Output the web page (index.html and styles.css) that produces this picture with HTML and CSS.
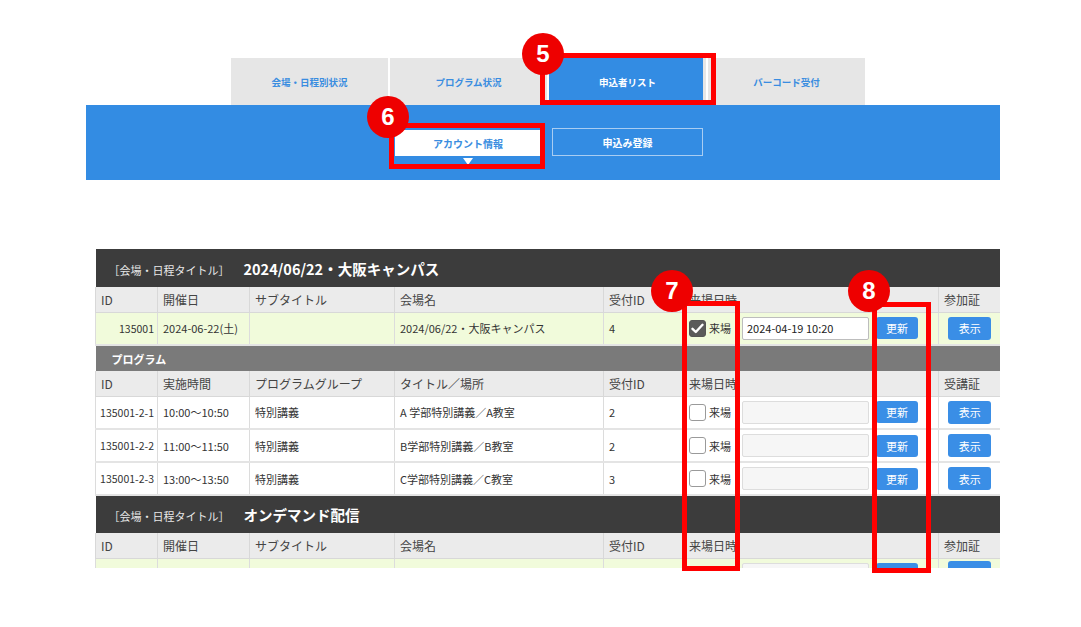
FILE: index.html
```html
<!DOCTYPE html>
<html>

<head>
    <title>申込者リスト</title>
    <link rel="stylesheet" href="styles.css">
</head>

<body>
    <div class="page">
        <div class="nav">
            <div class="tabs">
                <div class="tab">会場・日程別状況</div>
                <div class="tab">プログラム状況</div>
                <div class="tab tab-active">申込者リスト</div>
                <div class="tab">バーコード受付</div>
            </div>
            <div class="band">
                <div class="subtabs">
                    <div class="subtab subtab-active">アカウント情報</div>
                    <div class="subtab">申込み登録</div>
                </div>
            </div>
        </div>

        <div class="list">
            <table class="entry">
                <colgroup>
                    <col class="c-id">
                    <col class="c-date">
                    <col class="c-sub">
                    <col class="c-venue">
                    <col class="c-recv">
                    <col class="c-visit">
                    <col class="c-card">
                </colgroup>

                <tr class="venue">
                    <th colspan="7"><span class="venue-label">［会場・日程タイトル］</span><span class="venue-name">2024/06/22・大阪キャンパス</span></th>
                </tr>
                <tr class="cols">
                    <th>ID</th>
                    <th>開催日</th>
                    <th>サブタイトル</th>
                    <th>会場名</th>
                    <th>受付ID</th>
                    <th>来場日時</th>
                    <th>参加証</th>
                </tr>
                <tr class="row row-venue">
                    <td class="num">135001</td>
                    <td>2024-06-22(土)</td>
                    <td></td>
                    <td>2024/06/22・大阪キャンパス</td>
                    <td>4</td>
                    <td>
                        <div class="visit">
                            <span class="check check-on"><svg width="13" height="11" viewBox="0 0 13 11"><path d="M1.5 5.8 L4.8 9 L11.5 1.8" fill="none" stroke="#fff" stroke-width="2.4" stroke-linecap="round" stroke-linejoin="round"/></svg></span>
                            <span class="visit-label">来場</span>
                            <input class="stamp" type="text" value="2024-04-19 10:20">
                            <button class="btn">更新</button>
                        </div>
                    </td>
                    <td class="center"><button class="btn btn-wide">表示</button></td>
                </tr>

                <tr class="program">
                    <th colspan="7">プログラム</th>
                </tr>
                <tr class="cols">
                    <th>ID</th>
                    <th>実施時間</th>
                    <th>プログラムグループ</th>
                    <th>タイトル／場所</th>
                    <th>受付ID</th>
                    <th>来場日時</th>
                    <th>受講証</th>
                </tr>
                <tr class="row">
                    <td class="num">135001-2-1</td>
                    <td>10:00～10:50</td>
                    <td>特別講義</td>
                    <td>A 学部特別講義／A教室</td>
                    <td>2</td>
                    <td>
                        <div class="visit">
                            <span class="check"></span>
                            <span class="visit-label">来場</span>
                            <input class="stamp" type="text" disabled>
                            <button class="btn">更新</button>
                        </div>
                    </td>
                    <td class="center"><button class="btn btn-wide">表示</button></td>
                </tr>
                <tr class="row">
                    <td class="num">135001-2-2</td>
                    <td>11:00～11:50</td>
                    <td>特別講義</td>
                    <td>B学部特別講義／B教室</td>
                    <td>2</td>
                    <td>
                        <div class="visit">
                            <span class="check"></span>
                            <span class="visit-label">来場</span>
                            <input class="stamp" type="text" disabled>
                            <button class="btn">更新</button>
                        </div>
                    </td>
                    <td class="center"><button class="btn btn-wide">表示</button></td>
                </tr>
                <tr class="row">
                    <td class="num">135001-2-3</td>
                    <td>13:00～13:50</td>
                    <td>特別講義</td>
                    <td>C学部特別講義／C教室</td>
                    <td>3</td>
                    <td>
                        <div class="visit">
                            <span class="check"></span>
                            <span class="visit-label">来場</span>
                            <input class="stamp" type="text" disabled>
                            <button class="btn">更新</button>
                        </div>
                    </td>
                    <td class="center"><button class="btn btn-wide">表示</button></td>
                </tr>

                <tr class="venue">
                    <th colspan="7"><span class="venue-label">［会場・日程タイトル］</span><span class="venue-name">オンデマンド配信</span></th>
                </tr>
                <tr class="cols">
                    <th>ID</th>
                    <th>開催日</th>
                    <th>サブタイトル</th>
                    <th>会場名</th>
                    <th>受付ID</th>
                    <th>来場日時</th>
                    <th>参加証</th>
                </tr>
                <!-- next row only peeks in below the fold -->
                <tr class="row row-venue">
                    <td class="num"></td>
                    <td></td>
                    <td></td>
                    <td></td>
                    <td></td>
                    <td>
                        <div class="visit">
                            <span class="check check-off"></span>
                            <span class="visit-label"></span>
                            <input class="stamp" type="text" disabled>
                            <button class="btn"></button>
                        </div>
                    </td>
                    <td class="center"><button class="btn btn-wide"></button></td>
                </tr>
            </table>
        </div>

        <!-- callouts -->
        <div class="mark mark-5"></div>
        <div class="mark mark-6"></div>
        <div class="mark mark-7"></div>
        <div class="mark mark-8"></div>
        <div class="num-badge badge-5">5</div>
        <div class="num-badge badge-6">6</div>
        <div class="num-badge badge-7">7</div>
        <div class="num-badge badge-8">8</div>
    </div>
</body>

</html>
```

FILE: styles.css
```css
body {
    margin: 0;
    background-color: #ffffff;
    font-family: "Noto Sans CJK JP", "Noto Sans", sans-serif;
    color: #333333;
}

.page {
    position: relative;
    width: 1081px;
    height: 627px;
    overflow: hidden;
}

/* top navigation */

.nav {
    width: 914px;
    margin-left: 86px;
    padding-top: 58px;
}

.tabs {
    display: flex;
    gap: 2px;
    padding-left: 145px;
}

.tab {
    display: flex;
    justify-content: center;
    align-items: center;
    width: 157px;
    height: 47px;
    background-color: #e6e6e6;
    color: #3a8de0;
    font-size: 9.5px;
    font-weight: bold;
}

.tab-active {
    background-color: #338ce3;
    color: #ffffff;
    box-shadow: inset -3px 0 0 #e6e6e6;
}

.band {
    height: 75px;
    background-color: #338ce3;
    padding-top: 23px;
    box-sizing: border-box;
}

.subtabs {
    display: flex;
    gap: 11px;
    padding-left: 309px;
}

.subtab {
    position: relative;
    display: flex;
    justify-content: center;
    align-items: center;
    width: 151px;
    height: 28px;
    box-sizing: border-box;
    border: 1px solid #a9cdf2;
    color: #ffffff;
    font-size: 10px;
    font-weight: bold;
}

.subtab-active {
    width: 146px;
    height: 26px;
    margin-top: 2px;
    border: none;
    background-color: #ffffff;
    color: #3a8de0;
}

.subtab-active::after {
    content: "";
    position: absolute;
    left: 68px;
    top: 28px;
    border-left: 5px solid transparent;
    border-right: 5px solid transparent;
    border-top: 7px solid #ffffff;
}

/* applicant table */

.list {
    width: 905px;
    height: 319px;
    margin-left: 95px;
    margin-top: 69px;
    overflow: hidden;
}

.entry {
    width: 905px;
    table-layout: fixed;
    border-collapse: collapse;
    font-size: 11px;
}

.c-id { width: 62px; }
.c-date { width: 92px; }
.c-sub { width: 145px; }
.c-venue { width: 209px; }
.c-recv { width: 80px; }
.c-visit { width: 255px; }
.c-card { width: 62px; }

.entry th,
.entry td {
    padding: 0 5px;
    text-align: left;
    white-space: nowrap;
}

.venue {
    height: 38px;
    background-color: #3c3c3c;
}

.venue th {
    padding-left: 13px;
    color: #ffffff;
    font-weight: normal;
}

.venue-label {
    font-size: 11px;
    color: #e8e8e8;
}

.venue-name {
    margin-left: 14px;
    font-size: 14.5px;
    font-weight: bold;
}

.cols {
    height: 25px;
    background-color: #ebebeb;
}

.cols th {
    font-size: 12px;
    font-weight: normal;
    color: #444444;
    border-left: 1px solid #d8d8d8;
    border-bottom: 1px solid #d8d8d8;
}

.row {
    height: 33px;
    background-color: #ffffff;
}

.row-venue {
    background-color: #f1fbdb;
}

.row td {
    border-left: 1px solid #dcdcdc;
    border-bottom: 2px solid #e4e4e4;
    color: #333333;
}

.row td.num {
    text-align: right;
    padding-left: 0;
    padding-right: 3px;
    font-size: 10.5px;
}

.row td.center {
    text-align: center;
    padding: 0;
}

.program {
    height: 26px;
    background-color: #7a7a7a;
}

.program th {
    padding-left: 16px;
    color: #ffffff;
    font-size: 11px;
    font-weight: bold;
}

/* visit stamp controls */

.visit {
    display: flex;
    align-items: center;
}

.check {
    display: flex;
    justify-content: center;
    align-items: center;
    width: 17px;
    height: 17px;
    box-sizing: border-box;
    border: 1px solid #9a9a9a;
    border-radius: 3px;
    background-color: #ffffff;
}

.check-on {
    border-color: #555555;
    background-color: #5a5a5a;
}

.check-off {
    border-color: #8a8a8a;
    background-color: #8a8a8a;
}

.visit-label {
    width: 22px;
    margin-left: 3px;
    font-size: 11px;
    color: #333333;
}

.stamp {
    width: 127px;
    height: 23px;
    margin-left: 11px;
    box-sizing: border-box;
    padding: 0 4px;
    border: 1px solid #bdbdbd;
    border-radius: 2px;
    background-color: #ffffff;
    font-family: "Noto Sans CJK JP", "Noto Sans", sans-serif;
    font-size: 11px;
    color: #222222;
}

.stamp:disabled {
    border-color: #dddddd;
    background-color: #f6f6f6;
}

.btn {
    width: 42px;
    height: 22px;
    margin-left: 7px;
    padding: 0;
    border: none;
    border-radius: 3px;
    background-color: #3a8ee6;
    color: #ffffff;
    font-family: "Noto Sans CJK JP", "Noto Sans", sans-serif;
    font-size: 11px;
}

.btn-wide {
    width: 43px;
    height: 23px;
    margin-left: 0;
}

/* red callouts drawn over the page */

.mark {
    position: absolute;
    box-sizing: border-box;
    border: 5px solid #ff0000;
}

.mark-5 { left: 540px; top: 53px; width: 176px; height: 52px; }
.mark-6 { left: 389px; top: 123px; width: 156px; height: 46px; }
.mark-7 { left: 682px; top: 301px; width: 58px; height: 270px; }
.mark-8 { left: 872px; top: 302px; width: 59px; height: 271px; }

.num-badge {
    position: absolute;
    display: flex;
    justify-content: center;
    align-items: center;
    width: 42px;
    height: 42px;
    border-radius: 50%;
    background-color: #ee0000;
    color: #ffffff;
    font-family: "Liberation Sans", Arial, sans-serif;
    font-size: 24px;
    font-weight: bold;
}

.badge-5 { left: 522px; top: 33px; }
.badge-6 { left: 367px; top: 96px; }
.badge-7 { left: 651px; top: 270px; }
.badge-8 { left: 848px; top: 270px; }
```
